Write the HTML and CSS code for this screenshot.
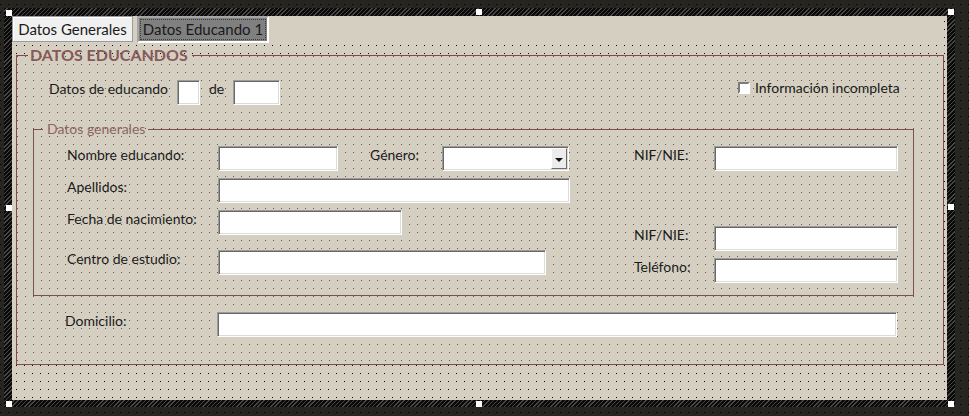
FILE: index.html
```html
<!DOCTYPE html>
<html lang="es">
<head>
    <meta charset="UTF-8">
    <title>Datos Educando - Vista Diseño</title>
    <link rel="stylesheet" href="styles.css">
</head>
<body>

<div class="frame">
    <span class="handle h-tl"></span>
    <span class="handle h-tm"></span>
    <span class="handle h-tr"></span>
    <span class="handle h-ml"></span>
    <span class="handle h-mr"></span>
    <span class="handle h-bl"></span>
    <span class="handle h-bm"></span>
    <span class="handle h-br"></span>

    <div class="form">
        <div class="tab-strip">
            <div class="tab tab-active">Datos Generales</div>
            <div class="tab tab-hover"><span class="tab-focus">Datos Educando 1</span></div>
        </div>

        <fieldset class="group group-main">
            <legend>DATOS EDUCANDOS</legend>

            <div class="row row-top">
                <span class="lbl lbl-educando">Datos de educando</span>
                <span class="box box-num"></span>
                <span class="lbl lbl-de">de</span>
                <span class="box box-total"></span>
                <span class="check"><span class="check-box"></span>Información incompleta</span>
            </div>

            <fieldset class="group group-sub">
                <legend>Datos generales</legend>
                <div class="cols">
                    <div class="col col-left">
                        <div class="row">
                            <span class="lbl lbl-main">Nombre educando:</span>
                            <span class="box w-nombre"></span>
                            <span class="lbl lbl-genero">Género:</span>
                            <span class="box combo"><span class="combo-btn"></span></span>
                        </div>
                        <div class="row">
                            <span class="lbl lbl-main">Apellidos:</span>
                            <span class="box w-apellidos"></span>
                        </div>
                        <div class="row">
                            <span class="lbl lbl-main">Fecha de nacimiento:</span>
                            <span class="box w-fecha"></span>
                        </div>
                        <div class="row row-gap">
                            <span class="lbl lbl-main">Centro de estudio:</span>
                            <span class="box w-centro"></span>
                        </div>
                    </div>
                    <div class="col col-right">
                        <div class="row">
                            <span class="lbl lbl-side">NIF/NIE:</span>
                            <span class="box w-side"></span>
                        </div>
                        <div class="row row-far">
                            <span class="lbl lbl-side">NIF/NIE:</span>
                            <span class="box w-side"></span>
                        </div>
                        <div class="row">
                            <span class="lbl lbl-side">Teléfono:</span>
                            <span class="box w-side"></span>
                        </div>
                    </div>
                </div>
            </fieldset>

            <div class="row row-domicilio">
                <span class="lbl lbl-dom">Domicilio:</span>
                <span class="box w-domicilio"></span>
            </div>
        </fieldset>
    </div>
</div>

</body>
</html>
```

FILE: styles.css
```css
body {
    margin: 0;
    width: 969px;
    height: 416px;
    overflow: hidden;
    font-family: 'Lato', 'Open Sans', sans-serif;
    font-size: 14px;
    color: #1a1a1a;
    background-color: #262521;
    /* design grid, one dot every 8px */
    background-image: url("data:image/svg+xml,%3Csvg xmlns='http://www.w3.org/2000/svg' width='8' height='8'%3E%3Crect width='1' height='1' fill='%23000'/%3E%3C/svg%3E");
    background-size: 8px 8px;
    background-position: 0 4px;
}

/* hatched selection frame round the form section */
.frame {
    position: relative;
    width: 935px;
    height: 384px;
    margin: 8px 0 0 4px;
    padding: 8px 8px 7px 8px;
    background: repeating-linear-gradient(135deg, #0a0a0a 0 2px, #484744 2px 3px);
}
.handle {
    position: absolute;
    width: 6px;
    height: 6px;
    background: #fff;
}
.h-tl { left: 2px; top: 2px; }
.h-tm { left: 472px; top: 1px; }
.h-tr { left: 944px; top: 1px; }
.h-ml { left: 2px; top: 197px; }
.h-mr { left: 944px; top: 196px; }
.h-bl { left: 2px; top: 393px; }
.h-bm { left: 472px; top: 393px; }
.h-br { left: 944px; top: 393px; }

.form {
    height: 100%;
    background-color: #d4cfc1;
    background-image: url("data:image/svg+xml,%3Csvg xmlns='http://www.w3.org/2000/svg' width='8' height='8'%3E%3Crect width='1' height='1' fill='%23111'/%3E%3C/svg%3E");
    background-size: 8px 8px;
    background-position: 4px 5px;
}

/* tabs */
.tab-strip {
    display: flex;
    gap: 4px;
    height: 27px;
    background: #d4cfc1;
    width: 932px;
}
.tab {
    box-sizing: border-box;
    display: flex;
    align-items: center;
    justify-content: center;
    font-size: 15px;
}
.tab-active {
    width: 121px;
    height: 26px;
    background: #f0f0f0;
    border: 1px solid #9b9b9b;
    box-shadow: inset 1px 1px #fff;
    padding-bottom: 1px;
}
.tab-hover {
    width: 132px;
    height: 27px;
    background: #808080;
    border: 2px solid;
    border-color: #a6a6a6 #fff #fff #a6a6a6;
    padding: 1px;
}
.tab-focus {
    flex: 1;
    align-self: stretch;
    display: flex;
    align-items: center;
    justify-content: center;
    border: 1px dotted #3a3a3a;
    padding-bottom: 1px;
}

/* frames */
.group {
    margin: 0;
    padding: 0;
    min-inline-size: 0;
    border: 1px solid #7f4a4e;
}
.group-main {
    width: 928px;
    box-sizing: border-box;
    margin: 3px 0 0 4px;
    padding: 16px 0 27px 0;
    background-color: #d4cfc1;
    background-image: url("data:image/svg+xml,%3Csvg xmlns='http://www.w3.org/2000/svg' width='8' height='8'%3E%3Crect width='1' height='1' fill='%237a4d4d'/%3E%3C/svg%3E");
    background-size: 8px 8px;
}
.group-main > legend {
    margin-left: 11px;
    padding: 0 4px 0 2px;
    font-size: 16px;
    line-height: 18px;
    font-weight: bold;
    color: #875a5a;
}
.group-sub {
    width: 881px;
    box-sizing: border-box;
    margin: 17px 0 0 16px;
    padding: 9px 0 12px 33px;
    border-color: #7a5052;
}
.group-sub > legend {
    margin-left: -24px;
    padding: 0 3px 0 4px;
    font-size: 14px;
    line-height: 16px;
    color: #8c6565;
}

/* rows */
.row {
    display: flex;
    align-items: flex-start;
}
.lbl {
    line-height: 18px;
    white-space: nowrap;
}
.row-top {
    height: 24px;
    padding-left: 32px;
}
.lbl-educando { width: 128px; }
.lbl-de { width: 24px; margin-left: 9px; }
.box-num { width: 23px; height: 24px; }
.box-total { width: 47px; height: 24px; }

.check {
    display: flex;
    align-items: center;
    gap: 5px;
    margin-left: 458px;
    line-height: 16px;
}
.check-box {
    width: 12px;
    height: 12px;
    box-sizing: border-box;
    background: #fff;
    border: 2px solid;
    border-color: #7c7c7c #fff #fff #7c7c7c;
}

.cols {
    display: flex;
    gap: 64px;
}
.col {
    display: flex;
    flex-direction: column;
    gap: 7px;
}
.row-gap { margin-top: 8px; }
.row-far { margin-top: 48px; }
.lbl-main { width: 151px; }
.lbl-genero { width: 72px; margin-left: 32px; }
.lbl-side { width: 80px; }
.lbl-dom { width: 152px; }

.row-domicilio {
    margin-top: 16px;
    padding-left: 48px;
}

/* text boxes */
.box {
    display: block;
    box-sizing: border-box;
    height: 25px;
    background: #fff;
    border: 1px solid;
    border-color: #9c9c9c #fff #fff #9c9c9c;
    box-shadow: inset 1px 1px #686868, inset -1px -1px #dcdcdc;
}
.w-nombre { width: 120px; }
.w-apellidos { width: 352px; }
.w-fecha { width: 184px; }
.w-centro { width: 328px; }
.w-side { width: 184px; }
.w-domicilio { width: 680px; }

.combo {
    width: 127px;
    display: flex;
    justify-content: flex-end;
    padding: 1px;
}
.combo-btn {
    width: 16px;
    height: 21px;
    box-sizing: border-box;
    display: flex;
    align-items: center;
    justify-content: center;
    background: #ececec;
    border: 1px solid;
    border-color: #fff #6a6a6a #6a6a6a #fff;
}
.combo-btn::before {
    content: "";
    border-left: 4px solid transparent;
    border-right: 4px solid transparent;
    border-top: 4px solid #111;
    margin-top: 2px;
}
```
